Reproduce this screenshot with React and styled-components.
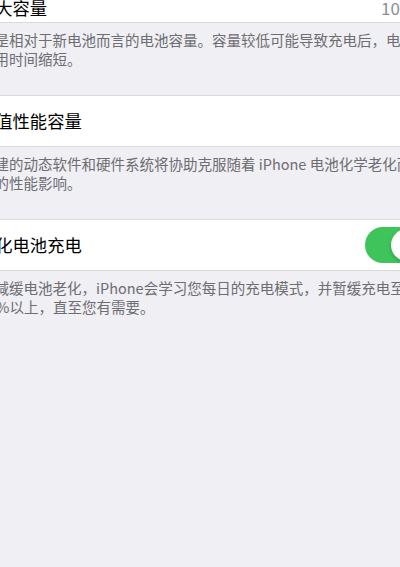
import React from "react";
import styled, { createGlobalStyle } from "styled-components";

const GlobalStyle = createGlobalStyle`
  html, body {
    margin: 0;
    padding: 0;
    background: #efeff4;
    overflow: hidden;
  }
  body {
    font-family: "Noto Sans CJK SC", "Noto Sans", sans-serif;
  }
`;

// the screenshot is a crop of a wider settings page, so the page is
// shifted left and runs past the right edge of the window
const Page = styled.div`
  width: 460px;
  margin-left: -22px;
  min-height: 567px;
  background: #efeff4;
`;

const Row = styled.div`
  box-sizing: border-box;
  display: flex;
  align-items: ${(p) => (p.$cut ? "flex-end" : "center")};
  justify-content: space-between;
  height: ${(p) => (p.$cut ? "23px" : "52px")};
  padding: ${(p) => (p.$cut ? "0 13px 4px 0" : "0 13px 0 0")};
  background: #fff;
  border-top: ${(p) => (p.$cut ? "none" : "1px solid #dadade")};
  border-bottom: 1px solid #dadade;
`;

const Title = styled.span`
  font-size: 17.3px;
  line-height: 20px;
  color: #000;
  white-space: nowrap;
`;

const Value = styled.span`
  font-size: 17px;
  line-height: 20px;
  color: #8e8e93;
  white-space: nowrap;
`;

const Footer = styled.div`
  box-sizing: border-box;
  height: 72px;
  padding: 8px 0 0 2px;
  font-size: 14.5px;
  line-height: 18.5px;
  color: #6d6d72;
`;

const Line = styled.div`
  white-space: nowrap;
`;

const Track = styled.div`
  position: relative;
  flex: none;
  width: 60px;
  height: 36px;
  border-radius: 18px;
  background: ${(p) => (p.$on ? "#3fc45c" : "#e5e5ea")};
`;

const Knob = styled.div`
  position: absolute;
  top: 2px;
  left: ${(p) => (p.$on ? "26px" : "2px")};
  width: 32px;
  height: 32px;
  border-radius: 50%;
  background: #fff;
  box-shadow: 0 2px 4px rgba(0, 0, 0, 0.18);
`;

const Toggle = ({ on }) => (
  <Track $on={on}>
    <Knob $on={on} />
  </Track>
);

const sections = [
  {
    title: "峰值性能容量",
    lines: [
      "内建的动态软件和硬件系统将协助克服随着 iPhone 电池化学老化而可能出",
      "现的性能影响。",
    ],
  },
  {
    title: "优化电池充电",
    toggle: true,
    lines: [
      "为减缓电池老化，iPhone会学习您每日的充电模式，并暂缓充电至",
      "80%以上，直至您有需要。",
    ],
  },
];

export default function App() {
  return (
    <>
      <GlobalStyle />
      <Page>
        <Row $cut>
          <Title>最大容量</Title>
          <Value>100%</Value>
        </Row>
        <Footer>
          <Line>这是相对于新电池而言的电池容量。容量较低可能导致充电后，电池</Line>
          <Line>使用时间缩短。</Line>
        </Footer>
        {sections.map((s) => (
          <React.Fragment key={s.title}>
            <Row>
              <Title>{s.title}</Title>
              {s.toggle && <Toggle on />}
            </Row>
            <Footer>
              {s.lines.map((l) => (
                <Line key={l}>{l}</Line>
              ))}
            </Footer>
          </React.Fragment>
        ))}
      </Page>
    </>
  );
}
